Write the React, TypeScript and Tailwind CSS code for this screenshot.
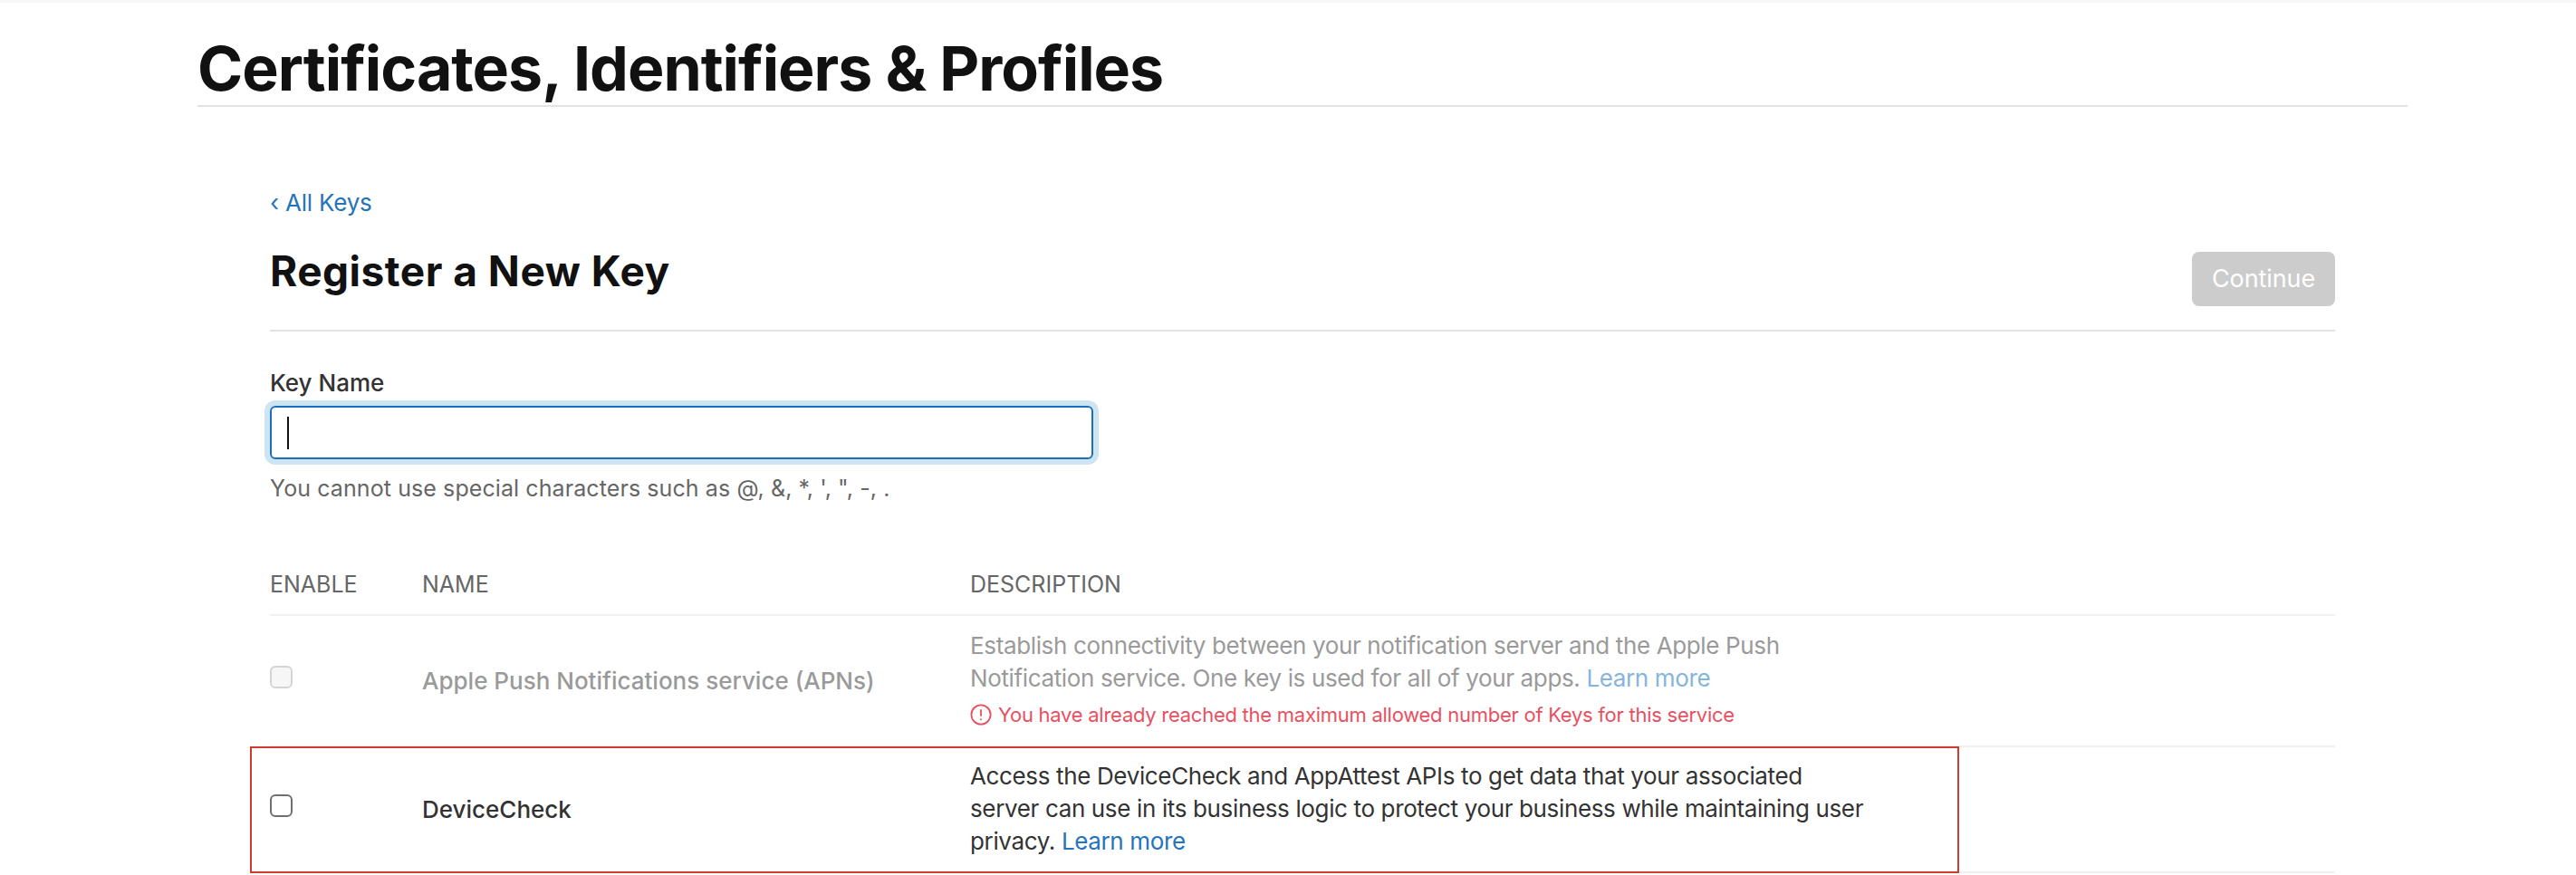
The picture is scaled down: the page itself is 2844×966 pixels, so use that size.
export default function App() {
  return (
    <div className="relative h-screen overflow-hidden bg-white font-['Inter',sans-serif] text-[#333333]">
      <div className="h-[3px] bg-[#f7f7f7]"></div>

      {/* Page title */}
      <div className="ml-[218px] h-[115px] w-[2440px] border-b-2 border-[#e3e3e3] pt-[32px]">
        <h1 className="text-[68px] leading-[80px] font-bold tracking-[-1px] text-[#111111]">Certificates, Identifiers &amp; Profiles</h1>
      </div>

      <div className="ml-[298px] w-[2280px]">
        <div className="pt-[88px]">
          <a className="block text-[26px] leading-[36px] tracking-[-0.2px] text-[#2474bb]">‹ All Keys</a>
        </div>

        <div className="mt-[27px] flex items-start justify-between border-b-2 border-[#e3e3e3] pb-[26px]">
          <h2 className="text-[46px] leading-[60px] font-bold tracking-[0.5px] text-[#111111]">Register a New Key</h2>
          <button className="mt-[9px] h-[60px] w-[158px] rounded-[8px] bg-[#cccccc] text-[27px] tracking-[-0.1px] text-white">Continue</button>
        </div>

        {/* Key name field */}
        <label className="mt-[39px] block text-[26px] leading-[36px] font-medium">Key Name</label>
        <div className="mt-[7px] flex h-[59px] w-[909px] items-center rounded-[6px] border-2 border-[#1a6fb8] pl-[17px] shadow-[0_0_0_6px_#cde4f3]">
          <div className="h-[36px] w-[2px] bg-[#111111]"></div>
        </div>
        <p className="mt-[14px] text-[25px] leading-[36px] tracking-[0.09px] text-[#666666]">You cannot use special characters such as @, &amp;, *, ', ", -, .</p>

        {/* Services table */}
        <div className="mt-[70px] grid grid-cols-[168px_605px_1fr] pb-[15px] text-[25px] leading-[36px] text-[#666666]">
          <div>ENABLE</div>
          <div>NAME</div>
          <div>DESCRIPTION</div>
        </div>

        <div className="grid grid-cols-[168px_605px_1fr] border-t-2 border-[#f0f0f0] pt-[15px] pb-[16px]">
          <div className="flex items-center pb-[8px]">
            <input type="checkbox" disabled className="h-[25px] w-[25px] appearance-none rounded-[6px] border-2 border-[#d4d4d4] bg-[#f6f6f6]" />
          </div>
          <div className="flex items-center pt-[2px] text-[26px] leading-[36px] font-medium text-[#9a9a9a]">Apple Push Notifications service (APNs)</div>
          <div>
            <p className="text-[26px] leading-[36px] tracking-[-0.36px] text-[#9a9a9a]">
              Establish connectivity between your notification server and the Apple Push
              <br />
              Notification service. One key is used for all of your apps. <a className="text-[#85b5dc]">Learn more</a>
            </p>
            <div className="mt-[4px] flex items-center gap-[7px] text-[22px] leading-[36px] tracking-[-0.26px] text-[#e8505f]">
              <svg width="24" height="24" viewBox="0 0 24 24" fill="none" stroke="#e8505f" strokeWidth="1.8">
                <circle cx="12" cy="12" r="10.6" />
                <path d="M12 6.2v7.6" />
                <circle cx="12" cy="17.2" r="1" fill="#e8505f" stroke="none" />
              </svg>
              <span>You have already reached the maximum allowed number of Keys for this service</span>
            </div>
          </div>
        </div>

        <div className="grid grid-cols-[168px_605px_1fr] border-y-2 border-[#f0f0f0] pt-[14px] pb-[15px]">
          <div className="flex items-center pb-[7px]">
            <input type="checkbox" className="h-[25px] w-[25px] appearance-none rounded-[6px] border-2 border-[#6e6e6e] bg-white" />
          </div>
          <div className="flex items-center pt-[1px] text-[26px] leading-[36px] font-medium">DeviceCheck</div>
          <p className="text-[26px] leading-[36px] tracking-[-0.36px]">
            Access the DeviceCheck and AppAttest APIs to get data that your associated
            <br />
            server can use in its business logic to protect your business while maintaining user
            <br />
            privacy. <a className="text-[#2474bb]">Learn more</a>
          </p>
        </div>
      </div>

      {/* Red annotation box drawn over the screenshot */}
      <div className="absolute top-[824px] left-[276px] h-[140px] w-[1887px] border-2 border-[#cf3b2c]"></div>
    </div>
  )
}
